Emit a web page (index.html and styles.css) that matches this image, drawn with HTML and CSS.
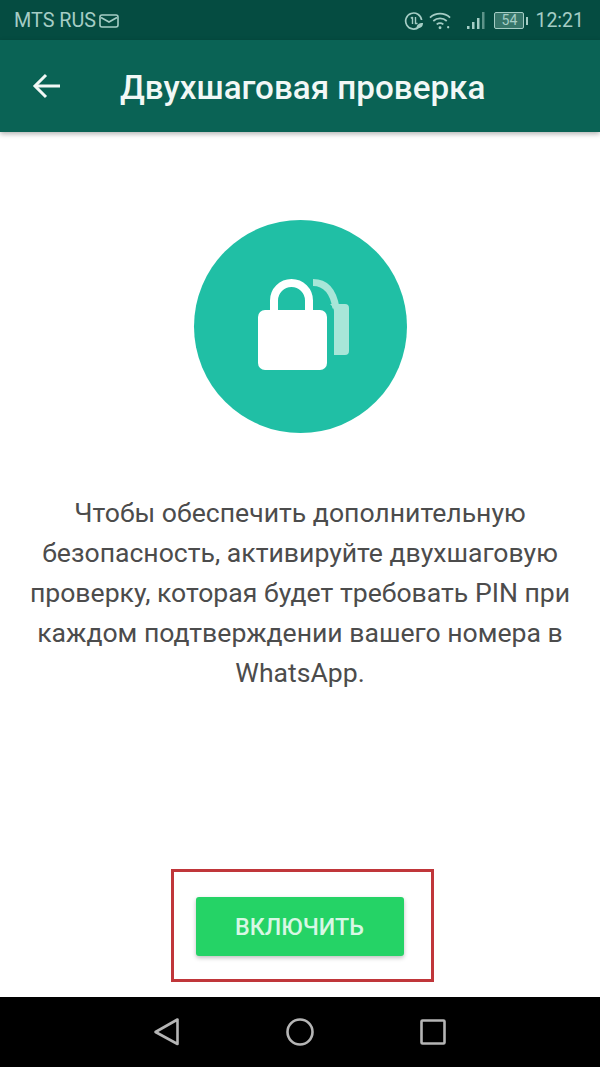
FILE: index.html
```html
<!DOCTYPE html>
<html lang="ru">
<head>
<meta charset="utf-8">
<title>Двухшаговая проверка</title>
<link rel="stylesheet" href="styles.css">
</head>
<body>
<div class="screen">
  <header class="status">
    <div class="status-left">
      <span class="carrier">MTS RUS</span>
      <svg class="mail" width="20" height="14" viewBox="0 0 20 14" fill="none" stroke="#a5cdc5" stroke-width="1.6"><rect x="1" y="1" width="18" height="12" rx="2"/><path d="M2 3.500 10 8l8-4.500"/></svg>
    </div>
    <div class="status-right">
      <svg width="20" height="20" viewBox="0 0 20 20" fill="none" stroke="#a5cdc5" stroke-width="1.7"><path d="M15 16A8 8 0 1 1 17.600 9"/><path d="M8.500 6v7M6.800 7.200 8.500 6M11.500 6v6.500h2" stroke-width="1.400"/><path d="M12.500 17c0-3 2-5 6.500-5 0 3.500-2 5.500-6.500 5z" fill="#a5cdc5" stroke="none"/></svg>
      <svg class="wifi" width="23" height="20" viewBox="0 0 24 20" fill="none" stroke="#a5cdc5" stroke-width="1.8"><path d="M1 6.500C7 1 16 1 22 6.500"/><path d="M4.500 10C8.500 6.500 14.500 6.500 18.500 10"/><path d="M8 13.500c2-1.500 5-1.500 7 0"/><circle cx="11.500" cy="17" r="1.500" fill="#a5cdc5" stroke="none"/><circle cx="20" cy="16.500" r="1.200" fill="#a5cdc5" stroke="none"/></svg>
      <svg class="signal" width="18" height="20" viewBox="0 0 18 20" fill="#a5cdc5"><rect x="0" y="15" width="2.500" height="3"/><rect x="5" y="11" width="2.500" height="7"/><rect x="10" y="7" width="2.500" height="11"/><rect x="15" y="1" width="2.500" height="17" opacity=".55"/></svg>
      <div class="battery"><span class="battery-body">54</span><span class="battery-tip"></span></div>
      <span class="clock">12:21</span>
    </div>
  </header>
  <div class="toolbar">
    <svg class="back" width="28" height="26" viewBox="0 0 28 26" fill="none" stroke="#f2f8f6" stroke-width="3"><path d="M28 13H3"/><path d="M14 2 3 13l11 11"/></svg>
    <h1 class="title">Двухшаговая проверка</h1>
  </div>
  <main class="content">
    <div class="badge">
      <svg width="213" height="213" viewBox="0 0 213 213">
        <path d="M119 62.500C131 62.500 139 70 142 88" fill="none" stroke="#a8e6d8" stroke-width="7"/>
        <path d="M136 84h15a4 4 0 0 1 4 4v43a4 4 0 0 1-4 4h-11V92q0-5-4-8z" fill="#a8e6d8"/>
        <path d="M80 92V80.500a17.500 17.500 0 0 1 35 0V92" fill="none" stroke="#fff" stroke-width="8"/>
        <rect x="64" y="90" width="69" height="60" rx="7" fill="#fff"/>
      </svg>
    </div>
    <p class="message">Чтобы обеспечить дополнительную безопасность, активируйте двухшаговую проверку, которая будет требовать PIN при каждом подтверждении вашего номера в WhatsApp.</p>
    <div class="highlight"><button class="enable">ВКЛЮЧИТЬ</button></div>
  </main>
  <nav class="navbar">
    <svg width="26" height="30" viewBox="0 0 26 30" fill="none" stroke="#b5b5b5" stroke-width="2.600" stroke-linejoin="round"><path d="M23.500 2.500V27L1.500 15z"/></svg>
    <svg width="30" height="30" viewBox="0 0 30 30" fill="none" stroke="#b5b5b5" stroke-width="2.600"><circle cx="15" cy="15" r="12.500"/></svg>
    <svg width="26" height="26" viewBox="0 0 26 26" fill="none" stroke="#b5b5b5" stroke-width="2.600" stroke-linejoin="round"><rect x="1.500" y="1.500" width="23" height="23" rx="1"/></svg>
  </nav>
</div>
</body>
</html>
```
FILE: styles.css
```css
* { box-sizing: border-box; }
html, body { margin: 0; padding: 0; }
body { font-family: Roboto, "Liberation Sans", sans-serif; background: #fff; }
.screen { width: 600px; height: 1067px; display: flex; flex-direction: column; overflow: hidden; }
.status { height: 40px; flex: none; background: #054c41; color: #a5cdc5; display: flex; justify-content: space-between; align-items: center; padding: 1px 16px 0 14px; font-size: 19.800px; }
.status-left { display: flex; align-items: center; gap: 3px; }
.status-right { display: flex; align-items: center; }
.wifi { margin-left: 5px; }
.signal { margin-left: 15px; }
.battery { display: flex; align-items: center; margin-left: 9px; }
.battery-body { width: 30px; height: 17px; border: 1.500px solid #a5cdc5; background: #37766a; font-size: 14px; line-height: 14px; text-align: center; border-radius: 2px; }
.battery-tip { width: 2px; height: 8px; margin-left: 2px; background: #a5cdc5; }
.clock { margin-left: 7px; font-size: 19.500px; }
.toolbar { height: 92px; flex: none; background: #0a6355; display: flex; align-items: center; padding: 0 0 0 32px; box-shadow: 0 2px 5px rgba(0,0,0,.3); position: relative; }
.title { margin: 2px 0 0 60px; font-size: 33.200px; font-weight: 500; color: #f2f8f6; white-space: nowrap; }
.content { flex: 1; display: flex; flex-direction: column; align-items: center; background: #fff; }
.badge { width: 213px; height: 213px; margin-top: 88px; border-radius: 50%; background: #20bfa5; }
.message { margin: 60px 0 0; width: 570px; font-size: 26.600px; line-height: 40px; color: #4c4c4c; text-align: center; }
.highlight { margin-top: auto; margin-bottom: 15px; margin-left: 5px; width: 263px; height: 113px; padding: 2px 6px 0 0; border: 3.500px solid #c0363a; display: flex; align-items: center; justify-content: center; }
.enable { width: 208px; height: 59px; border: 0; border-radius: 3px; background: #25d366; color: #d8f7e4; font: 500 23.300px Roboto, "Liberation Sans", sans-serif; box-shadow: 0 2px 4px rgba(0,0,0,.25); }
.navbar { height: 70px; flex: none; background: #000; display: flex; align-items: center; justify-content: center; gap: 105px; }
```
